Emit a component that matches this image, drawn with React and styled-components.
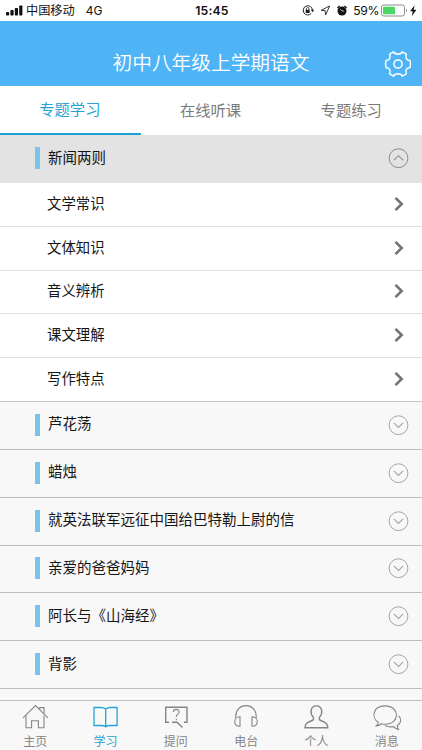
import React, { useState } from "react";
import styled, { createGlobalStyle } from "styled-components";

const GlobalStyle = createGlobalStyle`
  body {
    margin: 0;
    background: #f8f8f8;
    font-family: "Liberation Sans", "Noto Sans CJK SC", sans-serif;
    overflow: hidden;
  }
  svg {
    display: block;
    flex-shrink: 0;
  }
`;
const Screen = styled.div`
  display: flex;
  flex-direction: column;
  width: 422px;
  height: 750px;
  overflow: hidden;
`;
const StatusBar = styled.div`
  display: grid;
  grid-template-columns: 1fr auto 1fr;
  align-items: center;
  height: 21px;
  padding: 0 4px 0 6px;
  box-sizing: border-box;
  background: #fff;
  color: #111;
  font-size: 12px;
  line-height: 21px;
`;
const StatusGroup = styled.div`
  display: flex;
  align-items: center;
  justify-content: ${(props) => (props.$end ? "flex-end" : "flex-start")};
`;
const Carrier = styled.span`
  margin: 0 11px 0 3px;
  padding-top: 2px;
  font-size: 12.2px;
  line-height: 19px;
`;
const Network = styled.span`
  font-family: Inter, sans-serif;
  font-size: 12px;
`;
const Clock = styled.span`
  font-family: Inter, sans-serif;
  font-size: 12.2px;
  font-weight: 600;
  letter-spacing: 0.2px;
`;
const Percent = styled.span`
  margin: 0 2px 0 5px;
  font-family: Inter, sans-serif;
  font-size: 12.2px;
  letter-spacing: -0.4px;
`;
const Header = styled.header`
  display: grid;
  grid-template-columns: 38px 1fr 38px;
  align-items: center;
  height: 65px;
  padding-top: 20px;
  box-sizing: border-box;
  background: #4fb4f6;
  color: #fff;
`;
const Title = styled.h1`
  margin: 0;
  font-size: 19.7px;
  font-weight: 350;
  line-height: 42px;
  padding-bottom: 2px;
  text-align: center;
`;
const Tabs = styled.div`
  display: flex;
  height: 49px;
  background: #fff;
`;
const Tab = styled.button`
  flex: 1;
  padding: 0 1px ${(props) => (props.$active ? 3 : 1)}px 0;
  border: 0;
  border-bottom: 2px solid ${(props) => (props.$active ? "#1d9fd0" : "#fff")};
  background: none;
  color: ${(props) => (props.$active ? "#26a5d5" : "#7b7b7b")};
  font-family: inherit;
  font-size: 15.3px;
`;
const List = styled.div`
  flex: 1;
  overflow: hidden;
`;
const GroupRow = styled.div`
  display: flex;
  align-items: center;
  height: ${(props) => (props.$open ? 48 : 47.85)}px;
  padding: 0 13px 0 35px;
  box-sizing: border-box;
  border-bottom: 1px solid ${(props) => (props.$open ? "#e3e3e3" : "#bebebe")};
  background: ${(props) => (props.$open ? "#e3e3e3" : "#f8f8f8")};
  color: #151515;
  font-size: 14.5px;
`;
const Marker = styled.span`
  width: 5px;
  height: 22px;
  margin: 0 8px 1px 0;
  background: #7cc3ea;
`;
const Name = styled.span`
  flex: 1;
  line-height: 22px;
  padding-bottom: 2px;
`;
const Items = styled.div`
  border-bottom: 1px solid #c8c8c8;
  background: #fff;
`;
const Item = styled.div`
  display: flex;
  align-items: center;
  height: 43.75px;
  padding: 0 18px 1px 47px;
  box-sizing: border-box;
  border-bottom: 1px solid #dfdfdf;
  color: #151515;
  font-size: 14.4px;

  ${Name} {
    padding-bottom: 0;
  }

  &:last-child {
    border-bottom: 0;
    height: 43px;
  }
`;
const TabBar = styled.nav`
  display: flex;
  height: 50px;
  box-sizing: border-box;
  border-top: 1px solid #c0c0c0;
  background: #f8f8f8;
`;
const TabBarItem = styled.div`
  display: flex;
  flex: 1;
  flex-direction: column;
  align-items: center;
  padding-top: 2px;
  color: ${(props) => (props.$active ? "#25a5d5" : "#858585")};
  font-size: 12px;
  line-height: 18px;

  svg {
    margin-bottom: 2px;
  }
`;

const topics = [
  {
    name: "新闻两则",
    items: ["文学常识", "文体知识", "音义辨析", "课文理解", "写作特点"],
  },
  { name: "芦花荡" },
  { name: "蜡烛" },
  { name: "就英法联军远征中国给巴特勒上尉的信" },
  { name: "亲爱的爸爸妈妈" },
  { name: "阿长与《山海经》" },
  { name: "背影" },
  { name: "" },
];

const icons = {
  home: (
    <>
      <path d="M2 14.8 14.5 2.6 27 14.8" />
      <path d="M5 12.5v12.2h5.6v-7h6.8v7H23V12.5M18.7 6.2V4.6h4.4v6" />
    </>
  ),
  book: (
    <path strokeWidth="1.3" d="M14.7 6c-1.3-1-3-1.5-5-1.5H3v18h6.7c2 0 3.7.2 5 1.2 1.3-1 3-1.2 5-1.2h6.4v-18h-6.4c-2 0-3.7.5-5 1.5v17.2" />
  ),
  ask: (
    <>
      <path strokeWidth="1.4" d="M7 19.2H3.7V4.2H25v15.1h-3M10 19.2h5l5.5 5.3" />
      <path d="M11.3 9c.2-3.8 6.2-3.3 5.9 0-.2 2.4-2.9 2-2.9 5M14.3 15.7v1.5" />
    </>
  ),
  radio: (
    <path d="M3.8 15C2.4-1.5 25.6-1.5 24.2 15M8 13.8v9.5c-7 .5-7-9.5 0-9.5ZM20 13.8v9.5c7 .5 7-9.5 0-9.5Z" />
  ),
  person: (
    <path
      strokeWidth="1.4"
      d="M11.2 14.2C7.6 10 8.5 2.9 14.4 2.9s6.8 7.1 3.2 11.3c-.8 1.1-.4 2.7 1 3.3 4 1.8 7.2 2.2 7.2 7.3H3c0-5.1 3.2-5.5 7.2-7.3 1.4-.6 1.8-2.2 1-3.3Z"
    />
  ),
  message: (
    <>
      <path d="M5.3 19.2C-2 15-.4 2.9 12 2.9c15.3 0 15.3 18.4 0 18.4-1.5 0-2.7-.3-3.8-.6-1.3 1.6-3 2.3-5 2.3 1.3-1 2-2.2 2.1-3.8Z" />
      <path d="M25.7 12.8c3.3 3.6 2.4 7.4-1.4 9.7.1 1.6.4 2.7 1.1 4-2-.3-3.6-1.3-4.7-2.8-3.4.4-6.6 0-8.7-1.2" />
    </>
  ),
};

const sections = [
  { icon: "home", label: "主页" },
  { icon: "book", label: "学习" },
  { icon: "ask", label: "提问" },
  { icon: "radio", label: "电台" },
  { icon: "person", label: "个人" },
  { icon: "message", label: "消息" },
];

function SectionIcon({ name }) {
  return (
    <svg width="28" height="28" viewBox="0 0 28 28" fill="none" stroke="currentColor" strokeWidth="1.1" overflow="visible">
      {icons[name]}
    </svg>
  );
}

function CircleArrow({ open }) {
  return (
    <svg width="21" height="21" viewBox="0 0 21 21" fill="none" stroke={open ? "#8c8c8c" : "#a5a5a5"}>
      <circle cx="10.5" cy="10.2" r="9.4" strokeWidth="1" />
      <path d={open ? "m6 12.2 4.5-4.5 4.5 4.5" : "m5.8 7.8 4.7 4.7 4.7-4.7"} strokeWidth="1.1" />
    </svg>
  );
}

function Arrow() {
  return (
    <svg width="10" height="16" viewBox="0 0 10 16" fill="none" stroke="#777172" strokeWidth="2.6">
      <path d="m1.5 1.8 6.2 6.2-6.2 6.2" />
    </svg>
  );
}

function Signal() {
  return (
    <svg width="17" height="11" viewBox="0 0 17 11" fill="#111">
      <rect y="7" width="3.2" height="3.5" rx=".8" />
      <rect x="4.4" y="5" width="3.2" height="5.5" rx=".8" />
      <rect x="8.8" y="3" width="3.2" height="7.5" rx=".8" />
      <rect x="13.2" y=".5" width="3.2" height="10" rx=".8" />
    </svg>
  );
}

function StatusIcons() {
  return (
    <svg width="46" height="13" viewBox="0 0 46 13" fill="none" stroke="#222">
      <path d="M9.2 9.5A4.6 4.6 0 1 1 10.4 6" />
      <path d="M8.8 5.8h3.4l-1.7 2.4Z" fill="#222" stroke="none" />
      <rect x="3.7" y="5.8" width="4" height="3.2" fill="#222" stroke="none" />
      <path d="M4.5 6V4.7a1.2 1.2 0 0 1 2.4 0V6" strokeWidth=".8" />
      <path d="m27.6 2-8.4 4.3 4 .4.4 4.3Z" strokeWidth=".9" strokeLinejoin="round" />
      <circle cx="40" cy="7" r="4.5" fill="#111" stroke="none" />
      <path d="m35.4 4 2.2-2M42.4 2l2.2 2" strokeWidth="1.5" />
      <path d="m38.2 5 1.8 2h2.2" stroke="#fff" strokeWidth=".7" />
    </svg>
  );
}

function Battery() {
  return (
    <svg width="37" height="13" viewBox="0 0 37 13">
      <rect x=".5" y="1" width="23" height="11" rx="2.3" fill="#fff" stroke="#8c8c8c" />
      <rect x="2" y="2.8" width="12" height="7.4" rx=".7" fill="#4cd663" />
      <path d="M25 4.8c1.3.5 1.3 2.9 0 3.4Z" fill="#8c8c8c" />
      <path d="m33.7 1.3-4.6 5.9h2.7l-1.1 5 4.7-6.5h-2.8Z" fill="#111" />
    </svg>
  );
}

function Gear() {
  return (
    <svg width="28" height="28" viewBox="0 0 28 28" fill="none" stroke="#fff" strokeWidth="1.5" strokeLinejoin="round">
      <path d="M9.6 1.9C11 4.9 17 4.9 18.4 1.9L22.4 4.2C20.7 7.4 22.8 10.4 26 10.6Q27 14 26 17.4C22.8 17.6 20.7 20.6 22.4 23.8L18.4 26.1C17 23.1 11 23.1 9.6 26.1L5.6 23.8C7.3 20.6 5.2 17.6 2 17.4Q1 14 2 10.6C5.2 10.4 7.3 7.4 5.6 4.2Z" />
      <circle cx="14" cy="14" r="4.1" />
    </svg>
  );
}

function App() {
  const [opened, setOpened] = useState(0);
  const [tab, setTab] = useState(0);

  return (
    <Screen>
      <GlobalStyle />
      <StatusBar>
        <StatusGroup>
          <Signal />
          <Carrier>中国移动</Carrier>
          <Network>4G</Network>
        </StatusGroup>
        <Clock>15:45</Clock>
        <StatusGroup $end>
          <StatusIcons />
          <Percent>59%</Percent>
          <Battery />
        </StatusGroup>
      </StatusBar>
      <Header>
        <span />
        <Title>初中八年级上学期语文</Title>
        <Gear />
      </Header>
      <Tabs>
        {["专题学习", "在线听课", "专题练习"].map((label, i) => (
          <Tab key={label} $active={tab === i} onClick={() => setTab(i)}>
            {label}
          </Tab>
        ))}
      </Tabs>
      <List>
        {topics.map((topic, i) => (
          <React.Fragment key={i}>
            <GroupRow $open={opened === i} onClick={() => setOpened(opened === i ? -1 : i)}>
              <Marker />
              <Name>{topic.name}</Name>
              <CircleArrow open={opened === i} />
            </GroupRow>
            {opened === i && topic.items && (
              <Items>
                {topic.items.map((item) => (
                  <Item key={item}>
                    <Name>{item}</Name>
                    <Arrow />
                  </Item>
                ))}
              </Items>
            )}
          </React.Fragment>
        ))}
      </List>
      <TabBar>
        {sections.map((section) => (
          <TabBarItem key={section.icon} $active={section.icon === "book"}>
            <SectionIcon name={section.icon} />
            {section.label}
          </TabBarItem>
        ))}
      </TabBar>
    </Screen>
  );
}

export default App;
